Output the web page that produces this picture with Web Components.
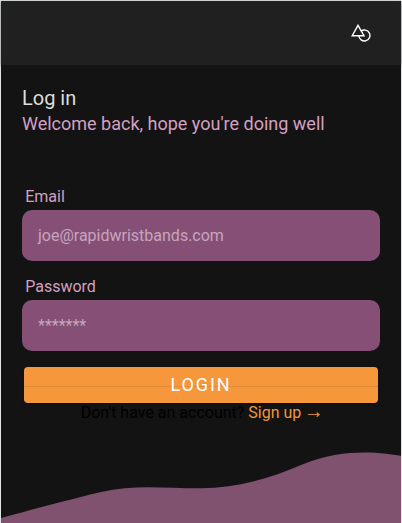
<!DOCTYPE html>
<html lang="en">
<head>
<meta charset="utf-8">
<title>Log in</title>
<style>
html, body { margin: 0; height: 100%; }
body { font-family: Roboto, sans-serif; background: #dfe3e3; overflow: hidden; }
</style>
</head>
<body>
<login-page></login-page>
<script>
const define = (name, html) => {
  const template = document.createElement('template');
  template.innerHTML = html;
  customElements.define(name, class extends HTMLElement {
    constructor() {
      super();
      this.attachShadow({ mode: 'open' }).append(template.content.cloneNode(true));
    }
  });
};

define('app-header', `
<style>
:host { display: flex; justify-content: flex-end; align-items: center; box-sizing: border-box; height: 64px; padding-right: 30px; background: #202020; box-shadow: 0 1px 3px rgba(0,0,0,.45); }
svg { display: block; }
</style>
<svg width="20" height="18" viewBox="0 0 20 18" fill="none" stroke="#fff" stroke-width="1.4">
  <path d="M7 1.3 L13 11.7 H1.2 Z"/>
  <path d="M9.9 7.2 A5.5 5.5 0 1 1 7.9 11.7"/>
</svg>`);

define('page-heading', `
<style>
:host { display: block; }
h1, p { margin: 0; font-weight: 400; }
h1 { font-size: 20px; line-height: 26px; color: #dedede; }
p { font-size: 18px; line-height: 26px; color: #d4a0c2; }
</style>
<h1><slot name="title"></slot></h1><p><slot></slot></p>`);

define('form-field', `
<style>
:host { display: block; }
.label { padding-left: 3.2px; font-size: 16px; line-height: 20px; height: 23px; color: #d4a0c2; }
.box { display: flex; align-items: center; box-sizing: border-box; height: 51px; padding: 0 16px; border-radius: 10px; background: #865076; color: #c6a5bc; font-size: 16px; line-height: 20px; }
</style>
<div class="label"><slot name="label"></slot></div>
<div class="box"><slot></slot></div>`);

define('submit-button', `
<style>
:host { display: grid; height: 36px; margin: 0 2px; border-radius: 4px; color: #fff; font-size: 18px; letter-spacing: 1.9px;
  background: linear-gradient(transparent 19px, #df8a37 19px, #df8a37 20px, transparent 20px) #f5973a; box-shadow: 0 1px 2px rgba(0,0,0,.5); }
span { place-self: center; line-height: 20px; }
</style>
<span><slot></slot></span>`);

define('signup-prompt', `
<style>
:host { display: block; text-align: center; font-size: 16px; line-height: 20px; height: 20px; color: #000; }
::slotted(b) { font-weight: 400; color: #f5973a; }
</style>
<slot></slot>`);

define('wave-footer', `
<style>
:host { display: block; height: 73px; }
svg { display: block; }
</style>
<svg width="400" height="73" viewBox="0 0 400 73" fill="#80526f">
  <path d="M0 68 L16.7 63.6 C33 59 67 50 100 42 C133 34 167 38.5 200 38.3 C233 38.3 267 29.5 300 15 C333 0.5 367 1.5 383 3.6 L400 5.7 V73 H0 Z"/>
</svg>`);

define('login-page', `
<style>
:host { display: flex; flex-direction: column; box-sizing: border-box; height: 523px; padding: 1px 1px 0; }
app-header { flex: none; }
main { flex: 1; display: flex; flex-direction: column; padding: 20px 21px 0; background: #131313; }
page-heading { margin-bottom: 50px; }
form-field { margin-bottom: 16px; }
wave-footer { margin: auto -21px 0; }
.arrow { font: 20px/16px "Liberation Serif", serif; margin: 0 -2.4px 0 -1.6px; }
</style>
<app-header></app-header>
<main>
  <page-heading><span slot="title">Log in</span>Welcome back, hope you're doing well</page-heading>
  <form-field><span slot="label">Email</span>joe@rapidwristbands.com</form-field>
  <form-field><span slot="label">Password</span>*******</form-field>
  <submit-button>LOGIN</submit-button>
  <signup-prompt>Don't have an account? <b>Sign up <span class="arrow">→</span></b></signup-prompt>
  <wave-footer></wave-footer>
</main>`);
</script>
</body>
</html>
